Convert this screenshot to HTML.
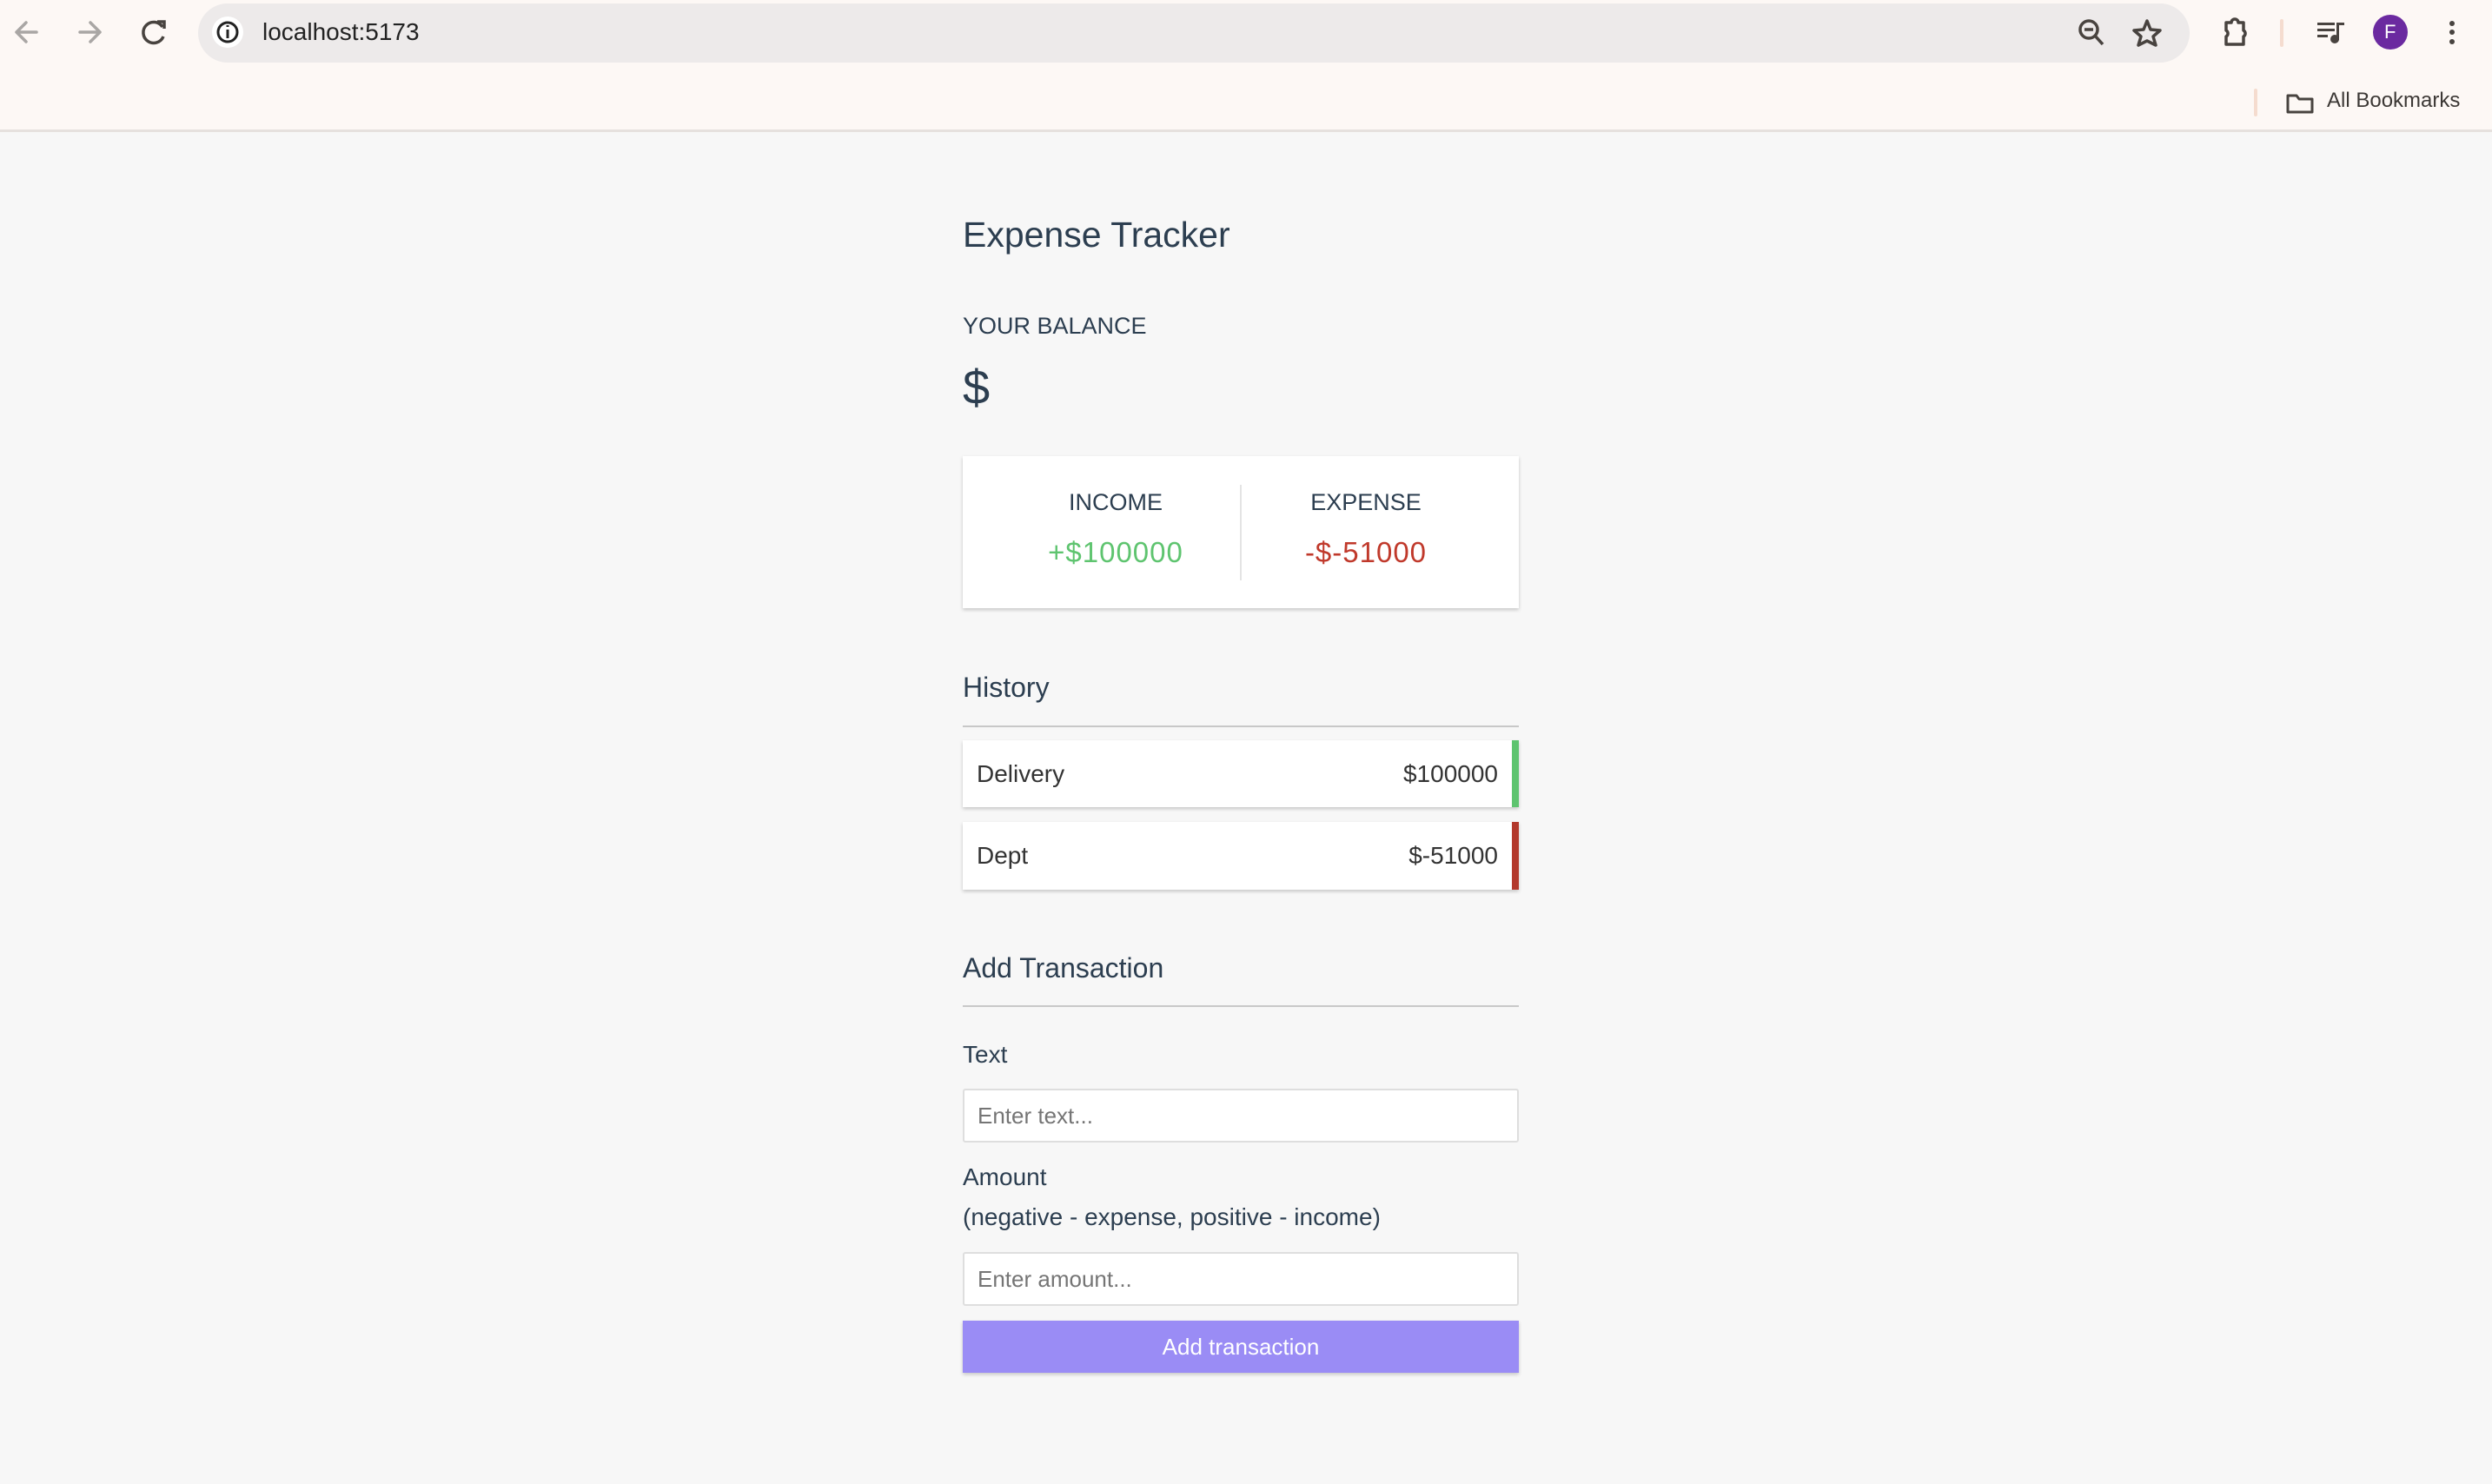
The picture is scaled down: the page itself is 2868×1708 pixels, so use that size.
<!DOCTYPE html>
<html><head><meta charset="utf-8"><style>
*{margin:0;padding:0;box-sizing:border-box}
body{width:2868px;height:1708px;background:#f7f7f7;font-family:"Liberation Sans",sans-serif;position:relative;overflow:hidden;color:#2c3e50}
.abs{position:absolute}
#top{left:0;top:0;width:2868px;height:152px;background:#fdf8f5;border-bottom:3px solid #e6e1de}
#bar{left:228px;top:4px;width:2292px;height:68px;background:#edeaea;border-radius:34px}
.t{position:absolute;white-space:nowrap;line-height:1}
.card{position:absolute;background:#fff;box-shadow:0 2px 4px rgba(0,0,0,0.2)}
.row{position:absolute;left:1108px;width:640px;background:#fff;box-shadow:0 2px 4px rgba(0,0,0,0.2)}
.inp{position:absolute;left:1108px;width:640px;height:62px;background:#fff;border:2px solid #dedede;border-radius:3px}
</style></head><body>
<div id="top" class="abs"></div>
<div id="bar" class="abs"></div>
<svg class="abs" style="left:0;top:0" width="2868" height="152">
 <g fill="none" stroke="#a9a6a4" stroke-width="3.5" stroke-linecap="round" stroke-linejoin="round">
  <path d="M42 37H20M30 26L19 37L30 48"/>
  <path d="M92 37H114M104 26L115 37L104 48"/>
 </g>
 <g fill="none" stroke="#48433f" stroke-width="3.5">
  <path d="M187 31A12 12 0 1 0 188 42"/>
  <path d="M181 25H189V33" stroke-linejoin="miter"/>
 </g>
 <circle cx="262" cy="37" r="18" fill="#fff"/>
 <circle cx="262" cy="37" r="11" fill="none" stroke="#222" stroke-width="3"/>
 <path d="M262 34V44M262 29V31" stroke="#222" stroke-width="3"/>
 <g fill="none" stroke="#48433f" stroke-width="3.5">
  <circle cx="2404" cy="34" r="10"/><path d="M2411 41L2420 51M2399 34H2409"/>
  <path d="M2471 24L2475 34L2486 35L2478 42L2481 52L2471 47L2461 52L2464 42L2456 35L2467 34Z" stroke-linejoin="round"/>
  <path d="M2562 26H2568A4 4 0 0 1 2576 26H2582V35A4 4 0 0 1 2582 42V51H2562V42A4 4 0 0 0 2562 35Z" stroke-linejoin="round"/>
 </g>
 <rect x="2624" y="22" width="4" height="32" rx="2" fill="#f5dccf"/>
 <g fill="#48433f"><rect x="2667" y="26" width="20" height="3"/><rect x="2667" y="33" width="20" height="3"/><rect x="2667" y="40" width="12" height="3"/><rect x="2689" y="26" width="9" height="3"/><rect x="2689" y="26" width="3" height="20"/><circle cx="2687" cy="45" r="5"/></g>
 <circle cx="2751" cy="37" r="20" fill="#6b2aa0"/>
 <g fill="#48433f"><circle cx="2822" cy="27" r="3"/><circle cx="2822" cy="37" r="3"/><circle cx="2822" cy="48" r="3"/></g>
 <rect x="2594" y="102" width="4" height="32" rx="2" fill="#f5dccf"/>
 <path d="M2633 110H2643L2646 114H2661V129H2633Z" fill="none" stroke="#48433f" stroke-width="3" stroke-linejoin="round"/>
</svg>
<div class="t" style="left:2744px;top:26px;font-size:22px;color:#fff">F</div>
<div class="t" style="left:302px;top:23px;font-size:28px;color:#222">localhost:5173</div>
<div class="t" style="left:2678px;top:104px;font-size:24px;color:#3c3835">All Bookmarks</div>

<div class="t" style="left:1108px;top:250px;font-size:41px">Expense Tracker</div>
<div class="t" style="left:1108px;top:362px;font-size:27px">YOUR BALANCE</div>
<div class="t" style="left:1108px;top:418px;font-size:56px">$</div>

<div class="card" style="left:1108px;top:525px;width:640px;height:175px"></div>
<div class="abs" style="left:1427px;top:558px;width:2px;height:110px;background:#e4e4e4"></div>
<div class="t" style="left:1128px;width:312px;text-align:center;top:565px;font-size:27px">INCOME</div>
<div class="t" style="left:1128px;width:312px;text-align:center;top:619px;font-size:33px;color:#5ec46f;letter-spacing:1px">+$100000</div>
<div class="t" style="left:1416px;width:312px;text-align:center;top:565px;font-size:27px">EXPENSE</div>
<div class="t" style="left:1416px;width:312px;text-align:center;top:619px;font-size:33px;color:#c0392b;letter-spacing:1px">-$-51000</div>

<div class="t" style="left:1108px;top:775px;font-size:32px">History</div>
<div class="abs" style="left:1108px;top:835px;width:640px;height:2px;background:#c8c8c8"></div>
<div class="row" style="top:852px;height:77px;border-right:8px solid #5ec46f"></div>
<div class="t" style="left:1124px;top:877px;font-size:28px;color:#333">Delivery</div>
<div class="t" style="left:1500px;width:224px;text-align:right;top:877px;font-size:28px;color:#333">$100000</div>
<div class="row" style="top:946px;height:78px;border-right:8px solid #b3392c"></div>
<div class="t" style="left:1124px;top:971px;font-size:28px;color:#333">Dept</div>
<div class="t" style="left:1500px;width:224px;text-align:right;top:971px;font-size:28px;color:#333">$-51000</div>

<div class="t" style="left:1108px;top:1098px;font-size:32px">Add Transaction</div>
<div class="abs" style="left:1108px;top:1157px;width:640px;height:2px;background:#c8c8c8"></div>
<div class="t" style="left:1108px;top:1200px;font-size:28px">Text</div>
<div class="inp" style="top:1253px"></div>
<div class="t" style="left:1125px;top:1271px;font-size:26px;color:#757575">Enter text...</div>
<div class="t" style="left:1108px;top:1341px;font-size:28px">Amount</div>
<div class="t" style="left:1108px;top:1387px;font-size:28px">(negative - expense, positive - income)</div>
<div class="inp" style="top:1441px"></div>
<div class="t" style="left:1125px;top:1459px;font-size:26px;color:#757575">Enter amount...</div>
<div class="abs" style="left:1108px;top:1520px;width:640px;height:60px;background:#9a8cf5;box-shadow:0 2px 4px rgba(0,0,0,0.2)"></div>
<div class="t" style="left:1108px;width:640px;text-align:center;top:1537px;font-size:26px;color:#fff">Add transaction</div>
</body></html>
